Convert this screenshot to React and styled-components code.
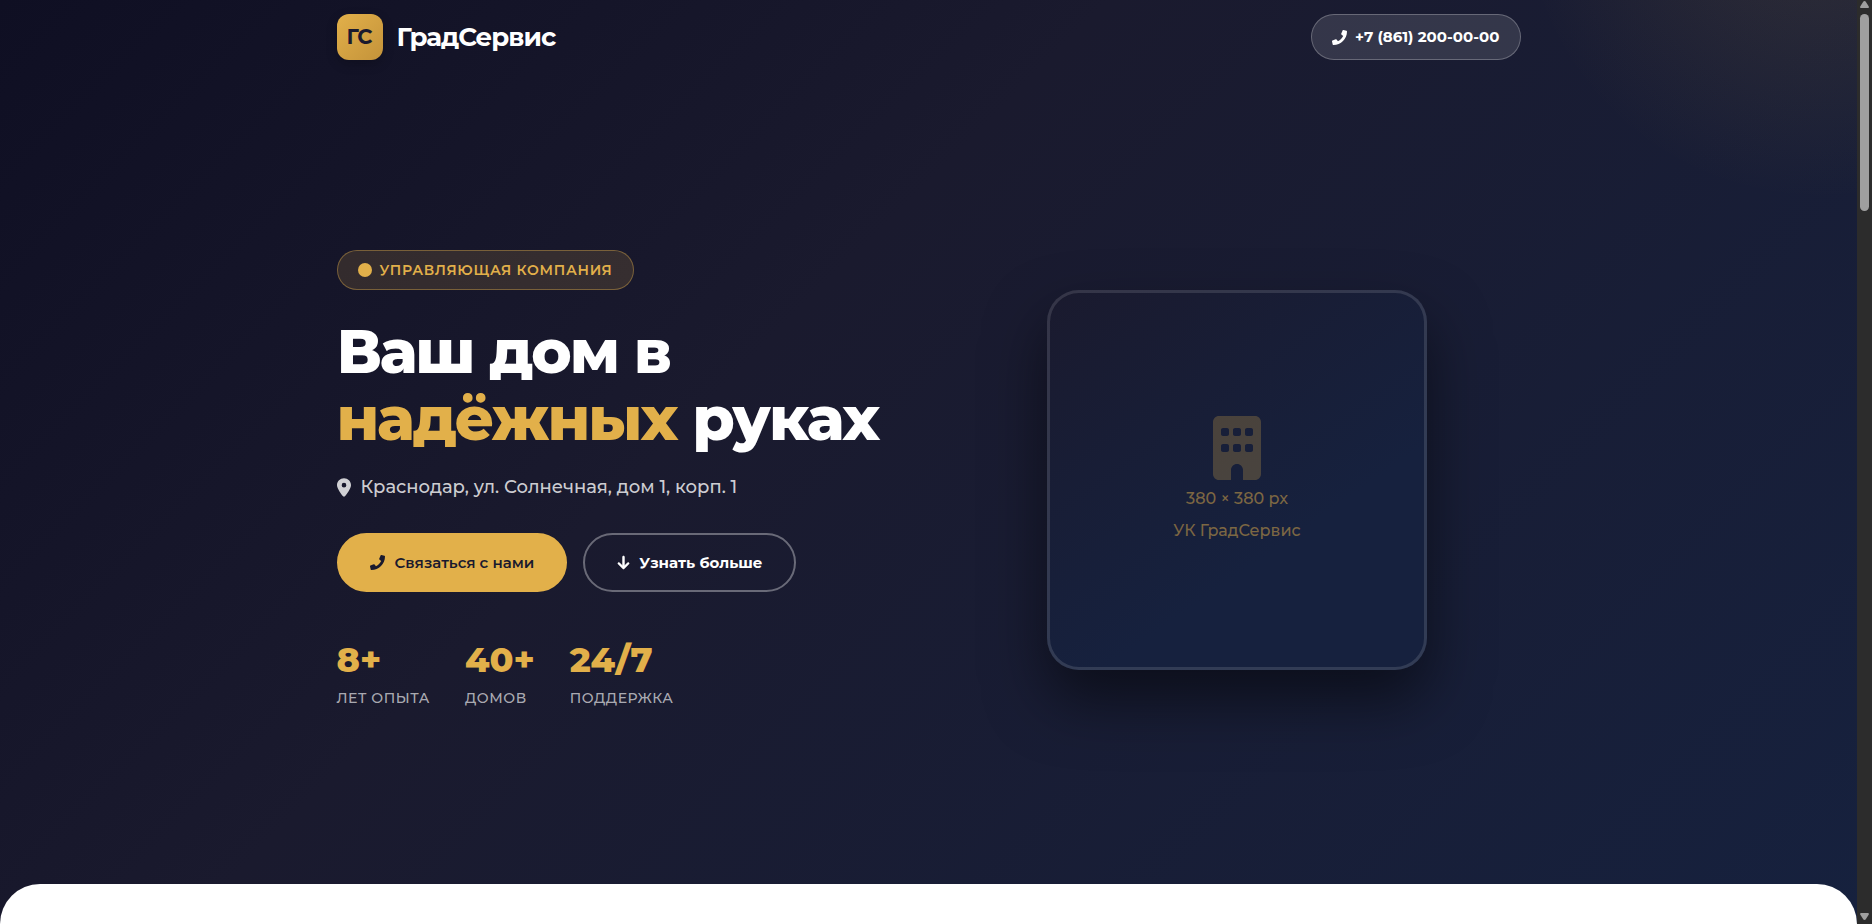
import React from 'react';
import styled, { createGlobalStyle } from 'styled-components';
import { FaPhone } from 'react-icons/fa';
import { FaLocationDot, FaArrowDown, FaBuilding, FaCircle } from 'react-icons/fa6';

const gold = '#e2b04a';
const dark = '#1a1a2e';

const GlobalStyle = createGlobalStyle`
  * {
    box-sizing: border-box;
    margin: 0;
    padding: 0;
  }

  body {
    font-family: Montserrat, Inter, sans-serif;
    background: #ffffff;
    color: #ffffff;
  }
`

const Window = styled.div`
  display: flex;
  height: 100vh;
  overflow: hidden;
`

const Page = styled.div`
  flex: 1;
  min-width: 0;
`

const Hero = styled.section`
  display: flex;
  flex-direction: column;
  min-height: 100vh;
  padding-bottom: 40px;
  background:
    radial-gradient(circle 300px at 98% -100px, rgba(226, 176, 74, 0.12), transparent),
    linear-gradient(135deg, #0f0f23 0%, ${dark} 40%, #16213e 100%);
`

const Container = styled.div`
  width: 100%;
  max-width: 1184px;
  margin: 0 auto;
`

const Header = styled(Container)`
  display: flex;
  align-items: center;
  justify-content: space-between;
  padding: 14px 0 16px;
`

const Logo = styled.a`
  display: flex;
  align-items: center;
  gap: 14px;
  color: #ffffff;
  font-size: 26px;
  font-weight: 700;
  letter-spacing: -1px;
  line-height: 28px;
  text-decoration: none;
`

const LogoMark = styled.span`
  display: flex;
  align-items: center;
  justify-content: center;
  width: 46px;
  height: 46px;
  border-radius: 12px;
  background: linear-gradient(135deg, ${gold}, #c4933a);
  box-shadow: 0 4px 12px rgba(0, 0, 0, 0.2);
  color: ${dark};
  font-size: 21px;
  font-weight: 700;
  letter-spacing: 0;
`

const PhoneLink = styled.a`
  display: flex;
  align-items: center;
  gap: 8px;
  height: 46px;
  padding: 0 20px;
  border: 1px solid rgba(255, 255, 255, 0.25);
  border-radius: 23px;
  background: rgba(255, 255, 255, 0.12);
  color: #ffffff;
  font-size: 15px;
  font-weight: 700;
  line-height: 20px;
  text-decoration: none;
`

const HeroBody = styled(Container)`
  flex: 1;
  display: grid;
  grid-template-columns: 1fr 1fr;
  align-items: center;
  gap: 50px;
`

const Badge = styled.p`
  display: flex;
  align-items: center;
  gap: 8px;
  width: fit-content;
  height: 40px;
  padding: 0 20px;
  border: 1px solid rgba(226, 176, 74, 0.4);
  border-radius: 20px;
  background: rgba(226, 176, 74, 0.15);
  color: ${gold};
  font-size: 14px;
  font-weight: 600;
  letter-spacing: 0.05em;
  line-height: 18px;
  text-transform: uppercase;
`

const Title = styled.h1`
  margin-top: 28px;
  font-size: 61px;
  font-weight: 800;
  letter-spacing: -2px;
  line-height: 67px;

  em {
    color: ${gold};
    font-style: normal;
  }
`

const Address = styled.p`
  display: flex;
  align-items: center;
  gap: 10px;
  margin-top: 20px;
  color: rgba(255, 255, 255, 0.8);
  font-size: 18px;
  font-weight: 500;
  line-height: 30px;

  svg {
    width: 14px;
    height: 19px;
  }
`

const Actions = styled.div`
  display: flex;
  gap: 16px;
  margin-top: 31px;
`

const Button = styled.button`
  display: flex;
  align-items: center;
  gap: ${props => (props.$outline ? '8px' : '10px')};
  height: 59px;
  padding: 0 31px;
  border: 2px solid ${props => (props.$outline ? 'rgba(255, 255, 255, 0.35)' : gold)};
  border-radius: 30px;
  background: ${props => (props.$outline ? 'transparent' : gold)};
  color: ${props => (props.$outline ? '#ffffff' : dark)};
  font-family: inherit;
  font-size: 15px;
  font-weight: ${props => (props.$outline ? 700 : 600)};
  line-height: 18px;
  cursor: pointer;
`

const DownIcon = styled(FaArrowDown)`
  stroke: currentColor;
  stroke-width: 18px;
  overflow: visible;
`

const Stats = styled.ul`
  display: flex;
  gap: 35px;
  margin-top: 41px;
  list-style: none;
`

const StatValue = styled.strong`
  display: block;
  color: ${gold};
  font-size: 35px;
  font-weight: 800;
  line-height: 53px;
`

const StatLabel = styled.span`
  display: block;
  color: rgba(255, 255, 255, 0.65);
  font-size: 14px;
  font-weight: 500;
  letter-spacing: 0.04em;
  line-height: 24px;
  text-transform: uppercase;
`

const Photo = styled.div`
  justify-self: center;
  display: flex;
  flex-direction: column;
  align-items: center;
  justify-content: center;
  width: 380px;
  height: 380px;
  padding-top: 3px;
  border: 3px solid rgba(255, 255, 255, 0.12);
  border-radius: 32px;
  background: linear-gradient(145deg, ${dark}, #16213e 65%) border-box;
  box-shadow: 0 30px 60px rgba(0, 0, 0, 0.5);
  color: rgba(226, 176, 74, 0.5);
  font-size: 16px;
  font-weight: 500;
  line-height: 32px;

  svg {
    margin-bottom: 3px;
    opacity: 0.5;
  }
`

const NextSection = styled.section`
  height: 80px;
  margin-top: -40px;
  border-radius: 40px 40px 0 0;
  background: #ffffff;
`

const Scrollbar = styled.div`
  display: flex;
  flex-direction: column;
  align-items: center;
  width: 15px;
  background: #2c2c2c;
  color: #9f9f9f;
`

const ScrollArrow = styled.svg`
  width: 15px;
  height: 14px;
  fill: currentColor;
`

const ScrollTrack = styled.div`
  flex: 1;
  width: 9px;
`

const ScrollThumb = styled.div`
  height: 22%;
  border-radius: 5px;
  background: currentColor;
`

const stats = [
  { value: '8+', label: 'лет опыта' },
  { value: '40+', label: 'домов' },
  { value: '24/7', label: 'поддержка' },
];

export default class App extends React.Component {
  render() {
    return (
      <Window>
        <GlobalStyle />
        <Page>
          <Hero>
            <Header as="header">
              <Logo href="#top">
                <LogoMark>ГС</LogoMark>
                ГрадСервис
              </Logo>
              <PhoneLink href="tel:+78612000000">
                <FaPhone size={15} />
                +7 (861) 200-00-00
              </PhoneLink>
            </Header>
            <HeroBody>
              <div>
                <Badge>
                  <FaCircle size={14} />
                  Управляющая компания
                </Badge>
                <Title>
                  Ваш дом в<br />
                  <em>надёжных</em> руках
                </Title>
                <Address>
                  <FaLocationDot />
                  Краснодар, ул. Солнечная, дом 1, корп. 1
                </Address>
                <Actions>
                  <Button type="button">
                    <FaPhone size={15} />
                    Связаться с нами
                  </Button>
                  <Button type="button" $outline>
                    <DownIcon size={15} />
                    Узнать больше
                  </Button>
                </Actions>
                <Stats>
                  {stats.map(stat => (
                    <li key={stat.label}>
                      <StatValue>{stat.value}</StatValue>
                      <StatLabel>{stat.label}</StatLabel>
                    </li>
                  ))}
                </Stats>
              </div>
              <Photo>
                <FaBuilding size={64} />
                <span>380 × 380 px</span>
                <span>УК ГрадСервис</span>
              </Photo>
            </HeroBody>
          </Hero>
          <NextSection />
        </Page>
        <Scrollbar aria-hidden="true">
          <ScrollArrow viewBox="0 0 15 14">
            <path d="M7.5 1Q8.3 1 8.8 1.8L11.8 6.4Q12.4 8 11 8H4Q2.6 8 3.2 6.4L6.2 1.8Q6.7 1 7.5 1Z" />
          </ScrollArrow>
          <ScrollTrack>
            <ScrollThumb />
          </ScrollTrack>
          <ScrollArrow viewBox="0 0 15 14">
            <path d="M7.5 10Q8.3 10 8.8 9.2L11.8 4.6Q12.4 3 11 3H4Q2.6 3 3.2 4.6L6.2 9.2Q6.7 10 7.5 10Z" />
          </ScrollArrow>
        </Scrollbar>
      </Window>
    );
  }
}
